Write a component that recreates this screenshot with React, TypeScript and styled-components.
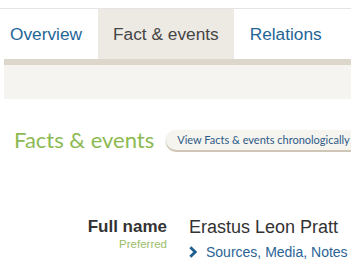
import React from "react";
import styled, { createGlobalStyle } from "styled-components";

const Global = createGlobalStyle`
  html, body { margin: 0; padding: 0; background: #ffffff; }
  body { font-family: "Liberation Sans", Arial, sans-serif; }
`;

const Page = styled.div`
  width: 351px;
  height: 273px;
  overflow: hidden;
  padding-top: 8px;
  box-sizing: border-box;
`;

const TabBar = styled.nav`
  display: flex;
  height: 50px;
  border-top: 1px solid #e4e4e4;
`;

const Tab = styled.div<{ $active?: boolean }>`
  display: flex;
  align-items: center;
  padding: 0 15.5px;
  font-size: 17.3px;
  color: ${(p) => (p.$active ? "#454545" : "#1f6596")};
  background: ${(p) => (p.$active ? "#ede9e3" : "transparent")};
  white-space: nowrap;
  &:first-child { padding-left: 10px; }
`;

const Band = styled.div`
  height: 34px;
  margin-left: 4px;
  border-top: 6px solid #ddd7cb;
  background: #f6f4f0;
`;

const HeadRow = styled.div`
  display: flex;
  align-items: center;
  gap: 12px;
  padding: 27px 0 0 14px;
  white-space: nowrap;
`;

const Heading = styled.h2`
  margin: 0;
  font-family: Lato, "Open Sans", sans-serif;
  font-weight: 400;
  font-size: 22px;
  color: #8cba52;
`;

const PillButton = styled.div`
  flex: none;
  height: 20px;
  padding: 0 10px 0 11px;
  display: flex;
  align-items: center;
  border-radius: 10px;
  background: #f6f4ef;
  box-shadow: 0 2px 0 #cfc6b6, -1px 1px 2px rgba(0,0,0,0.08);
  font-family: Lato, "Open Sans", sans-serif;
  font-size: 11px;
  color: #2d5a88;
`;

const FactRow = styled.div`
  display: grid;
  grid-template-columns: 167px 1fr;
  column-gap: 22px;
  padding-top: 64px;
`;

const LabelCol = styled.div`
  display: flex;
  flex-direction: column;
  align-items: flex-end;
`;

const Label = styled.div`
  font-weight: 700;
  font-size: 17px;
  color: #333333;
  line-height: 20px;
`;

const SubLabel = styled.div`
  font-size: 11.5px;
  color: #9bbd6a;
  line-height: 14px;
`;

const ValueCol = styled.div`
  display: flex;
  flex-direction: column;
`;

const Value = styled.div`
  font-size: 18px;
  color: #333333;
  line-height: 20px;
  white-space: nowrap;
`;

const MoreLink = styled.div`
  display: flex;
  align-items: center;
  gap: 9px;
  margin-top: 7px;
  font-size: 14px;
  color: #2a6496;
  white-space: nowrap;
`;

export default function App() {
  return (
    <Page>
      <Global />
      <TabBar>
        <Tab>Overview</Tab>
        <Tab $active>Fact &amp; events</Tab>
        <Tab>Relations</Tab>
      </TabBar>
      <Band />
      <HeadRow>
        <Heading>Facts &amp; events</Heading>
        <PillButton>View Facts &amp; events chronologically</PillButton>
      </HeadRow>
      <FactRow>
        <LabelCol>
          <Label>Full name</Label>
          <SubLabel>Preferred</SubLabel>
        </LabelCol>
        <ValueCol>
          <Value>Erastus Leon Pratt</Value>
          <MoreLink>
            <svg width="8" height="12" viewBox="0 0 8 12">
              <polyline points="1.3,1.3 6.2,6 1.3,10.7" fill="none" stroke="#1f5f8f" strokeWidth="2.8" />
            </svg>
            Sources, Media, Notes
          </MoreLink>
        </ValueCol>
      </FactRow>
    </Page>
  );
}
